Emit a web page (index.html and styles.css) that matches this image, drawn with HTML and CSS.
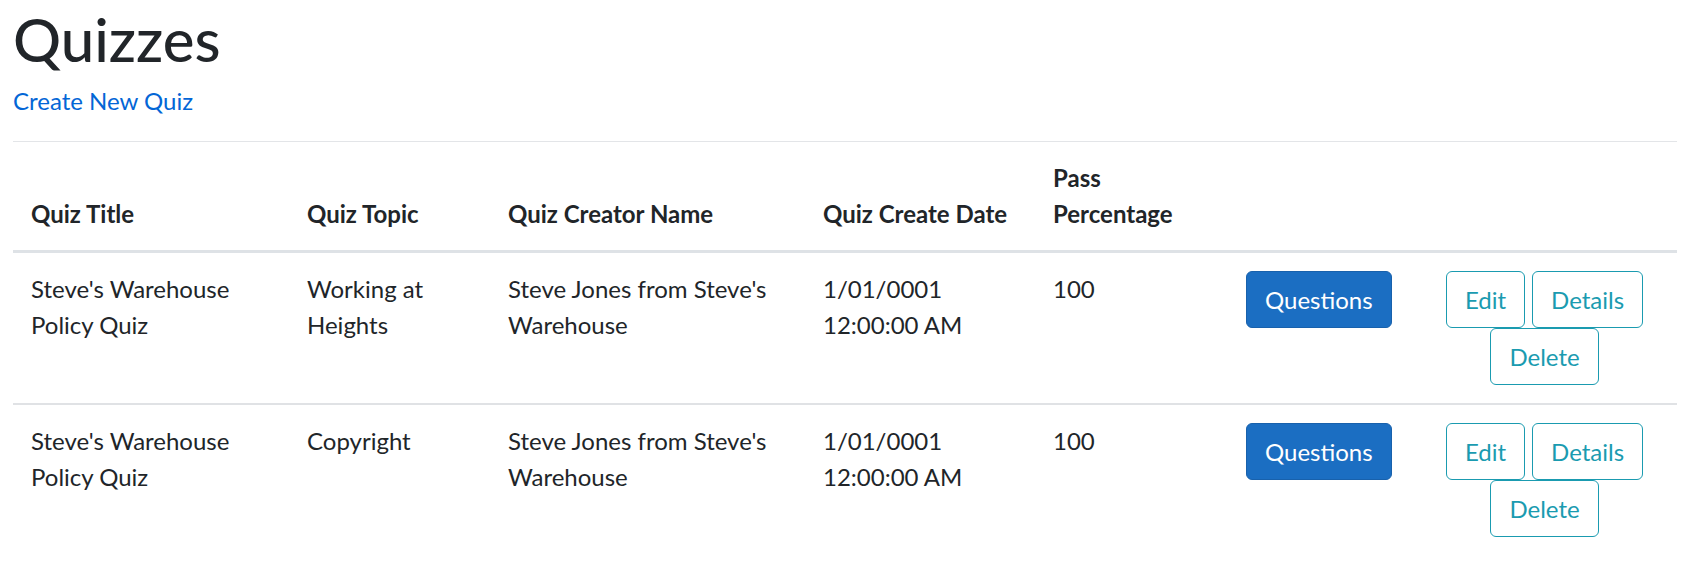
FILE: index.html
```html
<!DOCTYPE html>
<html lang="en">
<head>
<meta charset="utf-8">
<title>Quizzes</title>
<link rel="stylesheet" href="styles.css">
</head>
<body>
<main class="page">
  <h1 class="title">Quizzes</h1>
  <p class="create"><a href="#">Create New Quiz</a></p>
  <table class="table">
    <colgroup>
      <col class="c-title">
      <col class="c-topic">
      <col class="c-creator">
      <col class="c-date">
      <col class="c-pass">
      <col class="c-questions">
      <col class="c-actions">
    </colgroup>
    <thead>
      <tr>
        <th>Quiz Title</th>
        <th>Quiz Topic</th>
        <th>Quiz Creator Name</th>
        <th>Quiz Create Date</th>
        <th>Pass Percentage</th>
        <th></th>
        <th></th>
      </tr>
    </thead>
    <tbody>
      <tr>
        <td>Steve's Warehouse Policy Quiz</td>
        <td>Working at Heights</td>
        <td>Steve Jones from Steve's Warehouse</td>
        <td>1/01/0001 12:00:00 AM</td>
        <td>100</td>
        <td><a class="btn btn-primary" href="#">Questions</a></td>
        <td>
          <div class="actions">
            <a class="btn btn-outline" href="#">Edit</a>
            <a class="btn btn-outline" href="#">Details</a>
            <a class="btn btn-outline" href="#">Delete</a>
          </div>
        </td>
      </tr>
      <tr>
        <td>Steve's Warehouse Policy Quiz</td>
        <td>Copyright</td>
        <td>Steve Jones from Steve's Warehouse</td>
        <td>1/01/0001 12:00:00 AM</td>
        <td>100</td>
        <td><a class="btn btn-primary" href="#">Questions</a></td>
        <td>
          <div class="actions">
            <a class="btn btn-outline" href="#">Edit</a>
            <a class="btn btn-outline" href="#">Details</a>
            <a class="btn btn-outline" href="#">Delete</a>
          </div>
        </td>
      </tr>
    </tbody>
  </table>
</main>
</body>
</html>
```
FILE: styles.css
```css
html, body {
  margin: 0;
  padding: 0;
  background: #fff;
}

body {
  font-family: Lato, "Noto Sans", sans-serif;
  font-size: 24px;
  line-height: 36px;
  color: #212529;
}

.page {
  padding: 0 4px 0 13px;
}

.title {
  margin: 3px 0 8px;
  font-size: 60px;
  line-height: 72px;
  font-weight: 500;
  color: #212529;
}

.create {
  margin: 0 0 22px;
}

.create a {
  color: #0366d6;
  text-decoration: none;
}

.table {
  width: 100%;
  border-collapse: collapse;
  table-layout: fixed;
  margin: 0 0 24px;
}

.c-title { width: 276px; }
.c-topic { width: 201px; }
.c-creator { width: 315px; }
.c-date { width: 230px; }
.c-pass { width: 193px; }
.c-questions { width: 173px; }

.table th,
.table td {
  padding: 18px;
  text-align: left;
  vertical-align: top;
}

.table th {
  font-weight: 700;
  vertical-align: bottom;
  border-top: 1px solid #e3e5e8;
  border-bottom: 3px solid #dee2e6;
}

.table td {
  border-top: 2px solid #e0e2e5;
}

.actions {
  width: 251px;
  display: flex;
  flex-wrap: wrap;
  justify-content: center;
  column-gap: 7px;
}

.btn {
  display: inline-block;
  padding: 9.5px 18px;
  font-size: 24px;
  line-height: 36px;
  border: 1px solid transparent;
  border-radius: 6px;
  text-decoration: none;
  vertical-align: middle;
  white-space: nowrap;
}

.btn-primary {
  color: #fff;
  background-color: #1b6ec2;
  border-color: #1861ac;
}

.btn-outline {
  color: #1a9bb0;
  background: transparent;
  border-color: #1a9bb0;
}
```
